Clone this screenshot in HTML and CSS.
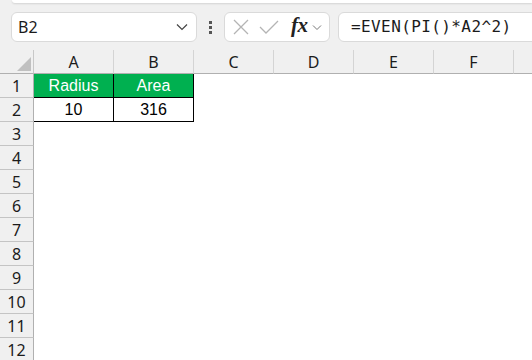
FILE: index.html
```html
<!DOCTYPE html>
<html>
  <head>
    <title>Sheet - EVEN</title>
    <link rel="stylesheet" href="styles.css">
  </head>
  <body>

    <div class="ribbonedge"></div>

    <div class="formulabar">
      <div class="namebox">
        <span class="cellref">B2</span>
        <svg class="chev" width="12" height="8" viewBox="0 0 12 8"><path d="M1 1.5 L6 6.5 L11 1.5" fill="none" stroke="#444" stroke-width="1.2"/></svg>
      </div>
      <div class="grip"><span></span><span></span><span></span></div>
      <div class="fxbox">
        <svg class="icon" width="16" height="16" viewBox="0 0 16 16"><path d="M1 1 L15 15 M15 1 L1 15" stroke="#b4b4b4" stroke-width="1.3"/></svg>
        <svg class="icon" width="20" height="16" viewBox="0 0 20 16"><path d="M1 8 L7 14 L19 2" fill="none" stroke="#b4b4b4" stroke-width="1.3"/></svg>
        <span class="fx">fx</span>
        <svg class="chev small" width="10" height="7" viewBox="0 0 10 7"><path d="M1 1.5 L5 5.5 L9 1.5" fill="none" stroke="#777" stroke-width="1"/></svg>
      </div>
      <div class="formula">=EVEN(PI()*A2^2)</div>
    </div>

    <div class="sheet">
      <div class="row colheads">
        <div class="corner"><svg width="14" height="14" viewBox="0 0 14 14"><path d="M14 0 L14 14 L0 14 Z" fill="#c0c0c0"/></svg></div>
        <div class="colhead">A</div>
        <div class="colhead">B</div>
        <div class="colhead">C</div>
        <div class="colhead">D</div>
        <div class="colhead">E</div>
        <div class="colhead">F</div>
        <div class="colhead"></div>
      </div>
      <div class="row">
        <div class="rowhead">1</div>
        <div class="cell hdr">Radius</div>
        <div class="cell hdr">Area</div>
        <div class="cell"></div><div class="cell"></div><div class="cell"></div><div class="cell"></div><div class="cell"></div>
      </div>
      <div class="row">
        <div class="rowhead">2</div>
        <div class="cell val">10</div>
        <div class="cell val">316</div>
        <div class="cell"></div><div class="cell"></div><div class="cell"></div><div class="cell"></div><div class="cell"></div>
      </div>
      <div class="row"><div class="rowhead">3</div></div>
      <div class="row"><div class="rowhead">4</div></div>
      <div class="row"><div class="rowhead">5</div></div>
      <div class="row"><div class="rowhead">6</div></div>
      <div class="row"><div class="rowhead">7</div></div>
      <div class="row"><div class="rowhead">8</div></div>
      <div class="row"><div class="rowhead">9</div></div>
      <div class="row"><div class="rowhead">10</div></div>
      <div class="row"><div class="rowhead">11</div></div>
      <div class="row"><div class="rowhead">12</div></div>
    </div>

  </body>
</html>
```

FILE: styles.css
```css
html, body          { margin: 0; padding: 0; overflow: hidden; }
body                { background: #f0f0f0; font-family: "Noto Sans", "Liberation Sans", sans-serif; color: #1b1b1b; width: 532px; height: 360px; }

.ribbonedge         { height: 3px; margin-left: 12px; background: #fff; border-bottom-left-radius: 4px; box-shadow: 0 1px 2px rgba(0,0,0,0.12); }

.formulabar         { display: flex; align-items: stretch; height: 30px; padding: 9px 0 8px 11px; }

.namebox            { box-sizing: border-box; width: 186px; display: flex; align-items: center; justify-content: space-between; padding: 0 8px 0 6px; background: #fff; border: 1px solid #dadada; border-radius: 6px; }
.cellref            { font-size: 16px; color: #1b1b1b; }

.grip               { width: 27px; display: flex; flex-direction: column; align-items: center; justify-content: center; gap: 2px; }
.grip span          { width: 3px; height: 3px; background: #555; }

.fxbox              { box-sizing: border-box; width: 106px; display: flex; align-items: center; gap: 0; padding: 0 4px 0 8px; background: #fff; border: 1px solid #dadada; border-radius: 6px; }
.fxbox .icon        { margin-right: 10px; }
.fx                 { font-family: "Liberation Serif", serif; font-style: italic; font-weight: bold; font-size: 21px; color: #222; margin: -3px 4px 0 2px; letter-spacing: -0.5px; }

.formula            { box-sizing: border-box; flex: 1; margin-left: 8px; margin-right: -10px; padding-left: 12px; line-height: 28px; background: #fff; border: 1px solid #dadada; border-radius: 6px; font-family: "DejaVu Sans Mono", monospace; font-size: 16px; letter-spacing: 0.4px; color: #1b1b1b; }

.sheet              { background: #fff; }
.row                { display: grid; grid-template-columns: 34px repeat(7, 80px); height: 24px; }

.corner,
.colhead,
.rowhead            { box-sizing: border-box; background: #f0f0f0; font-size: 16px; display: flex; align-items: center; justify-content: center; }

.corner             { border-right: 1px solid #c8c8c8; border-bottom: 1px solid #b0b0b0; align-items: flex-end; justify-content: flex-end; padding: 0 2px 2px 0; }
.colhead            { border-right: 1px solid #d4d4d4; border-bottom: 1px solid #b0b0b0; }
.rowhead            { border-right: 1px solid #b0b0b0; border-bottom: 1px solid #c4c4c4; }

.cell               { box-sizing: border-box; font-family: "Liberation Sans", sans-serif; font-size: 16px; display: flex; align-items: center; justify-content: center; }
.cell.hdr           { background: #00b050; color: #fff; border-right: 1px solid #000; border-bottom: 1px solid #000; }
.cell.val           { color: #000; border-right: 1px solid #000; border-bottom: 1px solid #000; }
```
